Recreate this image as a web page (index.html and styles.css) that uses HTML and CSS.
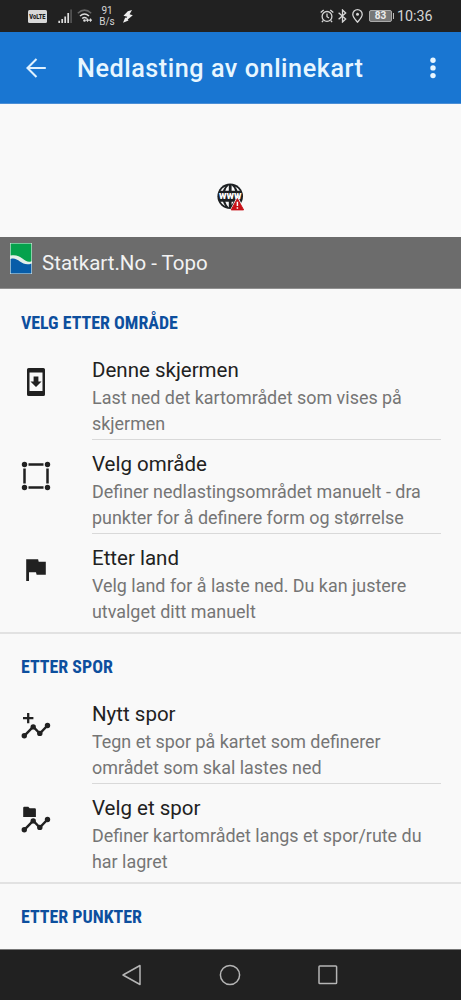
FILE: index.html
```html
<!DOCTYPE html>
<html lang="nb">
<head>
<meta charset="utf-8">
<title>Nedlasting av onlinekart</title>
<link rel="stylesheet" href="styles.css">
</head>
<body>
<div class="screen">
  <div class="status">
    <svg class="volte" width="19" height="13" viewBox="0 0 19 13"><rect width="19" height="13" rx="1.5" fill="#d8d8d8"/><text x="1.3" y="9.4" textLength="16.2" lengthAdjust="spacingAndGlyphs">VoLTE</text></svg>
    <svg class="signal" width="14" height="14" viewBox="0 0 14 14"><path d="M1.2 14v-2.3M4.2 14v-4M7.2 14V7.5M10.2 14V4" stroke="#ddd" stroke-width="1.7"/><path d="M13.1 14V.5" stroke="#555" stroke-width="1.7"/></svg>
    <svg class="wifi" width="16" height="14" viewBox="0 0 16 14" fill="none"><path d="M.8 4.3Q7.5-2 14.2 4.3" stroke="#666" stroke-width="1.5"/><path d="M3 7q4.5-4 9 0M5.2 9.5q2.3-2 4.6 0" stroke="#ddd" stroke-width="1.5"/><circle cx="7.5" cy="11.5" r="1.3" fill="#ddd"/><path d="M10.5 9.4v3.4M13.5 9.4v3.4M9 11.1h6" stroke="#ddd" stroke-width="1.1"/></svg>
    <div class="speed"><span>91</span><span>B/s</span></div>
    <svg class="bolt" width="10" height="13" viewBox="0 0 10 13"><path d="M4.8 1.2 9 0 6.6 4.2 9.8 5.2 4.7 9.4 5.5 10.4 0 12.7 2.2 7.4 3.2 8.1 4.3 6.7.5 5.7Z" fill="#eee"/></svg>
    <span class="gap"></span>
    <svg class="alarm" width="14" height="14" viewBox="0 0 14 14" fill="none" stroke="#d5d5d5" stroke-width="1.3"><circle cx="7" cy="7.4" r="4.9"/><path d="M7 4.6v3.1l2 1.3M.7 3.6 3.7.9M13.3 3.6 10.3.9M3.4 11.4l-1.5 1.8M10.6 11.4l1.5 1.8"/></svg>
    <svg class="bt" width="9" height="14" viewBox="0 0 9 14" fill="none" stroke="#d5d5d5" stroke-width="1.3"><path d="M.6 3.8 7.7 10 4.5 13V1L7.7 4 .6 10.2"/></svg>
    <svg class="pin" width="11" height="14" viewBox="0 0 11 14"><path d="M5.500 13.2C3.2 10.4.8 8 .8 5.4a4.7 4.7 0 0 1 9.4 0c0 2.600-2.400 5-4.700 7.800Z" fill="none" stroke="#d5d5d5" stroke-width="1.3"/><circle cx="5.5" cy="5.3" r="1.5" fill="#d5d5d5"/></svg>
    <div class="battery">83</div>
    <span class="nub"></span>
    <span class="clock">10:36</span>
  </div>

  <header class="appbar">
    <svg class="back" width="22" height="20" viewBox="0 0 22 20" fill="none" stroke="#dff1ff" stroke-width="2.1"><path d="M19.800 10H1.500M10.500 1 1.500 10l9 9"/></svg>
    <h1>Nedlasting av onlinekart</h1>
    <svg class="more" width="6" height="22" viewBox="0 0 6 22" fill="#e8f6ff"><circle cx="3" cy="3.2" r="2.7"/><circle cx="3" cy="10.9" r="2.7"/><circle cx="3" cy="18.6" r="2.7"/></svg>
  </header>

  <div class="preview">
    <svg width="28" height="30" viewBox="0 0 28 30">
      <circle cx="13.2" cy="13.2" r="12.8" fill="#1d2022"/>
      <g fill="#fafafa"><path d="M11.8 2.2v5.6H8.3Q9.5 4 11.8 2.2ZM14.6 2.2v5.6h3.5Q16.9 4 14.6 2.2ZM8.4 3.4Q6.8 5.2 6 7.8H3.5Q5.2 4.8 8.4 3.4ZM18 3.4q1.6 1.8 2.4 4.4h2.5Q21.2 4.8 18 3.4Z"/><path d="M8.3 18.8h3.5v5.6Q9.5 22.6 8.3 18.8ZM3.5 18.8H6q.8 2.6 2.4 4.4Q5.2 21.8 3.5 18.8ZM14.6 18.8h2L14.6 22Z"/></g>
      <text class="www" x="2" y="16.400" textLength="22.500" lengthAdjust="spacingAndGlyphs">www</text>
      <path d="M20.6 12.5 28 28.3H12.4Z" fill="#fafafa"/>
      <path d="M20.4 15.6 26.6 26.9H14.2Z" fill="#c71117" stroke="#c71117" stroke-linejoin="round"/>
      <path d="M20.4 18.7v4.4M20.4 24.2v1.6" stroke="#fff" stroke-width="1.5"/>
    </svg>
  </div>

  <div class="source">
    <svg width="22" height="31" viewBox="0 0 22 31"><rect width="22" height="31" fill="#e4efe9"/><path d="M.6.6h20.8v17.600C15 21.500 11.500 10 .6 12.500Z" fill="#05a24c"/><path d="M.6 16C8 13 12 24.500 21.400 20.500v9.900H.6Z" fill="#075da9"/></svg>
    <span>Statkart.No - Topo</span>
  </div>

  <main class="list">
    <section>
      <h2>VELG ETTER OMRÅDE</h2>
      <div class="item">
        <svg class="icon" width="32" height="32" viewBox="0 0 32 32"><path fill-rule="evenodd" d="M8.6 2h14.8q1.6 0 1.6 1.6v24.8q0 1.6-1.6 1.6H8.6Q7 30 7 28.400V3.600Q7 2 8.600 2ZM9.500 6.500v18.500h13V6.500ZM13.600 10.600h4.800v4.800h3.100L16 21l-5.500-5.600h3.100Z"/></svg>
        <div class="body"><h3>Denne skjermen</h3><p>Last ned det kartområdet som vises på<br>skjermen</p></div>
      </div>
      <div class="item">
        <svg class="icon" width="32" height="32" viewBox="0 0 32 32"><path d="M8.500 4.500h15M8.500 27.500h15M4.500 8.500v15M27.500 8.500v15" stroke="#212121" stroke-width="2.500"/><circle cx="4.500" cy="4.500" r="2.700"/><circle cx="27.500" cy="4.500" r="2.700"/><circle cx="4.500" cy="27.500" r="2.700"/><circle cx="27.500" cy="27.500" r="2.700"/></svg>
        <div class="body"><h3>Velg område</h3><p>Definer nedlastingsområdet manuelt - dra<br>punkter for å definere form og størrelse</p></div>
      </div>
      <div class="item">
        <svg class="icon" width="32" height="32" viewBox="0 0 32 32"><path d="M6.200 5.200h11.900l.6 2.600h7.100v13h-9.200l-.6-2.600H9v8.700H6.200Z"/></svg>
        <div class="body"><h3>Etter land</h3><p>Velg land for å laste ned. Du kan justere<br>utvalget ditt manuelt</p></div>
      </div>
    </section>
    <section>
      <h2>ETTER SPOR</h2>
      <div class="item">
        <svg class="icon" width="32" height="32" viewBox="0 0 32 32"><path d="M8.200 3v10.300M3 8.100h10.400" stroke="#212121" stroke-width="2.300"/><path d="M4.300 25.800 13.200 16.700l6.600 6.800 7.700-8" fill="none" stroke="#212121" stroke-width="2.500"/><circle cx="4.300" cy="25.800" r="2.700"/><circle cx="13.200" cy="16.900" r="2.700"/><circle cx="19.800" cy="23.400" r="2.700"/><circle cx="27.500" cy="15.500" r="2.700"/></svg>
        <div class="body"><h3>Nytt spor</h3><p>Tegn et spor på kartet som definerer<br>området som skal lastes ned</p></div>
      </div>
      <div class="item">
        <svg class="icon" width="32" height="32" viewBox="0 0 32 32"><path d="M4.300 2.800h4l1.400 1.500h5.100q1.100 0 1.100 1.100v7.500H3.200v-9q0-1.100 1.100-1.100Z"/><path d="M4.300 25.800 13.200 16.700l6.600 6.800 7.700-8" fill="none" stroke="#212121" stroke-width="2.500"/><circle cx="4.300" cy="25.800" r="2.700"/><circle cx="13.200" cy="16.900" r="2.700"/><circle cx="19.800" cy="23.400" r="2.700"/><circle cx="27.500" cy="15.500" r="2.700"/></svg>
        <div class="body"><h3>Velg et spor</h3><p>Definer kartområdet langs et spor/rute du<br>har lagret</p></div>
      </div>
    </section>
    <section>
      <h2>ETTER PUNKTER</h2>
    </section>
  </main>

  <nav class="navbar">
    <svg width="22" height="22" viewBox="0 0 22 22"><path d="M19 1.500v19L2 11Z" stroke-linejoin="round"/></svg>
    <svg width="22" height="22" viewBox="0 0 22 22"><circle cx="11" cy="11" r="9.600"/></svg>
    <svg width="22" height="22" viewBox="0 0 22 22"><rect x="2" y="2" width="17.600" height="17.600" rx=".8"/></svg>
  </nav>
</div>
</body>
</html>
```
FILE: styles.css
```css
* { box-sizing: border-box; }
body { margin: 0; font-family: Roboto, "Noto Sans", sans-serif; background: #f9f9f9; }
h1, h2, h3, p { margin: 0; }
svg { display: block; flex: none; }
.screen { width: 461px; height: 1000px; display: flex; flex-direction: column; overflow: hidden; }

.status { height: 32px; flex: none; background: #212121; color: #d5d5d5; display: flex; align-items: center; padding: 0 27px 0 28px; }
.volte { overflow: visible; }
.volte text { font-size: 8px; font-weight: 900; fill: #212121; }
.signal { margin-left: 11px; }
.wifi { margin-left: 5px; }
.speed { width: 16px; margin-left: 6px; display: flex; flex-direction: column; align-items: center; font-size: 10px; line-height: 11.500px; }
.bolt { margin-left: 8px; }
.gap { flex: 1; }
.bt { margin-left: 4px; }
.pin { margin-left: 5px; }
.battery { width: 23px; height: 12px; margin-left: 6px; border: 1px solid #aaa; border-radius: 2px; background: #777; color: #eee; font-size: 10px; line-height: 10.500px; font-weight: 700; text-align: center; }
.nub { width: 1px; height: 6px; margin-left: 1px; background: #bbb; }
.clock { width: 37px; margin-left: 3px; font-size: 14.300px; white-space: nowrap; }

.appbar { height: 72px; flex: none; background: #1976d2; color: #e8f6ff; display: flex; align-items: center; padding: 0 25px 6px 26px; border-bottom: 1px solid #4b8fd6; }
.back, .more { margin-top: 7px; }
.appbar h1 { flex: 1; margin: 9px 0 0 29px; font-size: 25.200px; font-weight: 500; line-height: 32px; letter-spacing: 0.550px; white-space: nowrap; }

.preview { height: 133px; flex: none; display: flex; justify-content: center; padding-top: 79px; }
.www { font-size: 10px; font-weight: 900; fill: #fff; stroke: #1d2022; stroke-width: 1px; paint-order: stroke; }

.source { height: 52px; flex: none; display: flex; align-items: center; gap: 10px; padding: 0 10px 9px; background: #6c6c6c; border-bottom: 1px solid #909090; color: #f2f2f2; font-size: 20.500px; white-space: nowrap; }
.source span { margin-top: 10px; }

.list { flex: 1; min-height: 0; overflow: hidden; }
section + section { border-top: 2px solid #e2e2e2; }
section { padding-bottom: 4px; }
h2 { height: 57px; padding: 21px 0 0 21px; color: #0d4f9e; font-family: "Roboto Condensed", Roboto, sans-serif; font-stretch: condensed; font-size: 17.900px; font-weight: 700; line-height: 26px; white-space: nowrap; }
section + section h2 { height: 56px; padding-top: 20px; }
.item { height: 94px; display: flex; padding-right: 20px; }
.icon { margin: 20px 0 0 20px; fill: #212121; }
.body { flex: 1; margin-left: 40px; padding-top: 11px; border-bottom: 1px solid #d9d9d9; white-space: nowrap; }
.item:last-child .body { border-bottom: 0; }
h3 { color: #212121; font-size: 20.500px; font-weight: 400; line-height: 26px; }
p { margin-top: 2px; color: #757575; font-size: 17.920px; line-height: 26px; }

.navbar { height: 51px; flex: none; background: #212121; display: flex; justify-content: center; align-items: center; gap: 76px; padding-right: 2px; border-top: 1px solid #777; }
.navbar svg { fill: none; stroke: #b5b5b5; stroke-width: 1.500px; }
```
